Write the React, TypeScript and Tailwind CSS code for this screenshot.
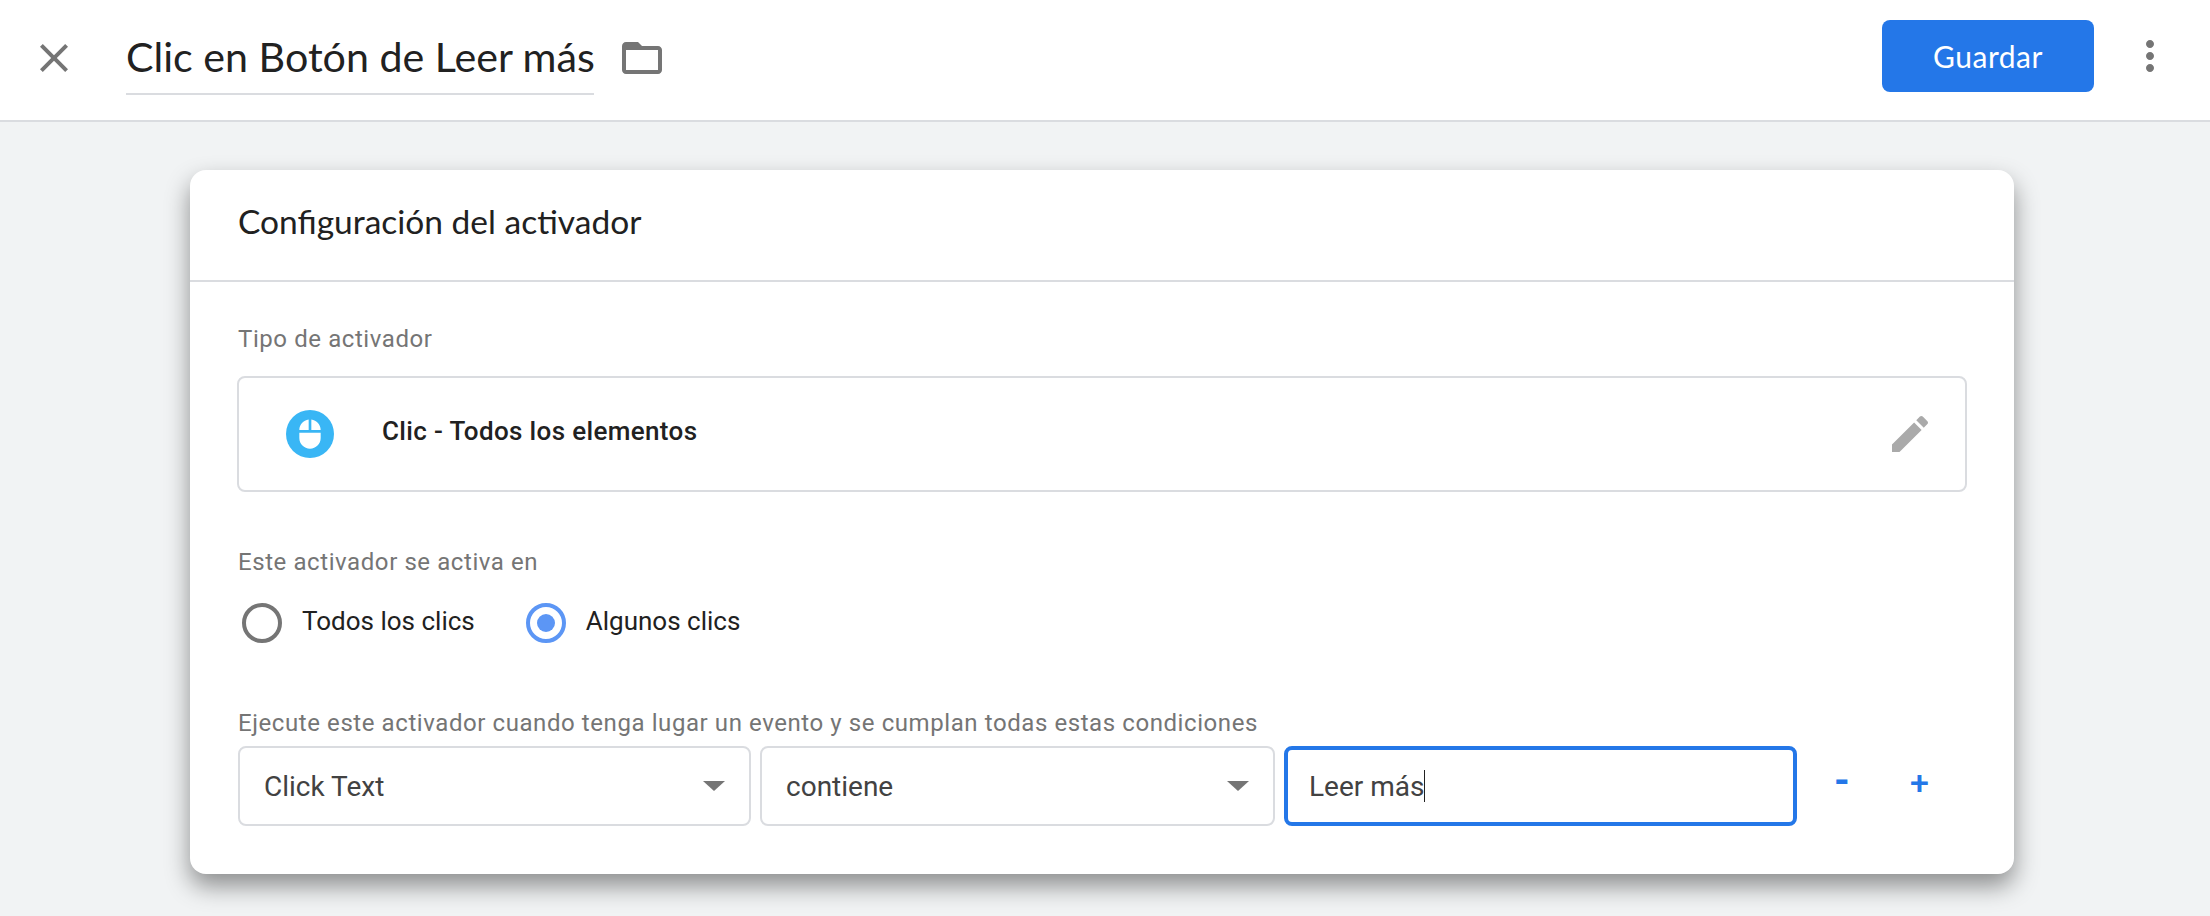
import {ReactNode} from "react";

const headingFont = "font-['Lato','Open_Sans',sans-serif]";

function Icon({d, size = 48, className}: {d: string, size?: number, className?: string}) {
    return (
        <svg width={size} height={size} viewBox="0 0 24 24" className={className} fill="currentColor">
            <path d={d}/>
        </svg>
    );
}

function Label({children, className}: {children: ReactNode, className?: string}) {
    return <div className={`pl-px text-[24px] leading-[28px] tracking-[0.58px] text-[#757575] ${className}`}>{children}</div>;
}

function Radio({label, checked}: {label: string, checked?: boolean}) {
    return (
        <div className="flex items-center gap-[20px]">
            {checked ? (
                <div className="flex size-[40px] items-center justify-center rounded-full border-[4px] border-[#5c96f5]">
                    <div className="size-[18px] rounded-full bg-[#5c96f5]"/>
                </div>
            ) : (
                <div className="size-[40px] rounded-full border-[4px] border-[#757575]"/>
            )}
            <span className="mb-[4px] text-[26px] leading-[32px] text-[#212121]">{label}</span>
        </div>
    );
}

function SelectBox({label, className}: {label: string, className?: string}) {
    return (
        <div className={`flex h-[80px] items-center justify-between rounded-[8px] border-2 border-[#dadce0] pl-[24px] pr-[24px] ${className}`}>
            <span className="mt-px text-[28px] text-[#424242]">{label}</span>
            <div className="h-0 w-0 border-x-[11px] border-t-[10px] border-x-transparent border-t-[#757575]"/>
        </div>
    );
}

export default function App() {
    return (
        <div className="h-[916px] w-[2210px] overflow-hidden bg-[#f1f3f4] font-['Roboto',sans-serif]">
            <header className="flex h-[122px] items-center border-b-2 border-[#dadce0] bg-white pb-[4px] pl-[30px] pr-[36px]">
                <Icon className="text-[#757575]"
                      d="M19 6.41 17.59 5 12 10.59 6.41 5 5 6.41 10.59 12 5 17.59 6.41 19 12 13.41 17.59 19 19 17.59 13.41 12z"/>
                <div className={`ml-[48px] flex h-[74px] w-[468px] items-center whitespace-nowrap border-b-2 border-[#dadce0] text-[41.2px] text-[#212121] ${headingFont}`}>
                    Clic en Botón de Leer más
                </div>
                <Icon className="ml-[24px] text-[#757575]"
                      d="M20 6h-8l-2-2H4c-1.1 0-1.99.9-1.99 2L2 18c0 1.1.9 2 2 2h16c1.1 0 2-.9 2-2V8c0-1.1-.9-2-2-2zm0 12H4V8h16v10z"/>
                <button className={`mb-[4px] ml-auto h-[72px] w-[212px] rounded-[8px] bg-[#2477e8] text-[30px] tracking-[0.5px] text-white ${headingFont}`}>
                    Guardar
                </button>
                <Icon className="mb-[4px] ml-[32px] text-[#757575]"
                      d="M12 8c1.1 0 2-.9 2-2s-.9-2-2-2-2 .9-2 2 .9 2 2 2zm0 2c-1.1 0-2 .9-2 2s.9 2 2 2 2-.9 2-2-.9-2-2-2zm0 6c-1.1 0-2 .9-2 2s.9 2 2 2 2-.9 2-2-.9-2-2-2z"/>
            </header>

            <main className="ml-[190px] mt-[48px] h-[704px] w-[1824px] rounded-[16px] bg-white shadow-[0_12px_24px_rgba(0,0,0,0.42)]">
                <div className={`flex h-[112px] items-center border-b-2 border-[#dadce0] pb-[8px] pl-[48px] text-[33.5px] text-[#212121] ${headingFont}`}>
                    Configuración del activador
                </div>
                <div className="px-[47px] pt-[43px]">
                    <Label>Tipo de activador</Label>
                    <div className="mt-[23px] flex h-[116px] items-center rounded-[8px] border-2 border-[#dadce0] pl-[47px] pr-[31px]">
                        <div className="flex size-[48px] items-center justify-center rounded-full bg-[#39b6f5] text-white">
                            <Icon size={32}
                                  d="M13 1.07V9h7c0-4.08-3.05-7.44-7-7.93zM4 15c0 4.42 3.58 8 8 8s8-3.58 8-8v-4H4v4zm7-13.93C7.05 1.56 4 4.92 4 9h7V1.07z"/>
                        </div>
                        <span className="mb-[6px] ml-[48px] text-[26px] font-medium tracking-[0.35px] text-[#212121]">Clic - Todos los elementos</span>
                        <Icon className="ml-auto text-[#aaaaaa]"
                              d="M3 17.25V21h3.75L17.81 9.94l-3.75-3.75L3 17.25zM20.71 7.04c.39-.39.39-1.02 0-1.41l-2.34-2.34c-.39-.39-1.02-.39-1.41 0l-1.83 1.83 3.75 3.75 1.83-1.83z"/>
                    </div>
                    <Label className="mt-[56px]">Este activador se activa en</Label>
                    <div className="mt-[27px] flex gap-[51px] pl-[5px]">
                        <Radio label="Todos los clics"/>
                        <Radio label="Algunos clics" checked/>
                    </div>
                    <Label className="mt-[66px]">Ejecute este activador cuando tenga lugar un evento y se cumplan todas estas condiciones</Label>
                    <div className="mt-[9px] flex items-center gap-[9px] pl-px">
                        <SelectBox label="Click Text" className="w-[513px]"/>
                        <SelectBox label="contiene" className="w-[515px]"/>
                        <div className="flex h-[80px] w-[513px] items-center rounded-[8px] border-[4px] border-[#2477e8] pl-[21px]">
                            <span className="mt-px text-[28px] text-[#424242]">Leer más</span>
                            <div className="h-[32px] w-px bg-[#212121]"/>
                        </div>
                        <div className="mb-[8px] ml-[28px] flex w-[95px] items-center justify-between leading-none text-[#2477e8]">
                            <span className="mb-[3px] text-[40px] font-bold">-</span>
                            <span className="text-[34px] font-medium">+</span>
                        </div>
                    </div>
                </div>
            </main>
        </div>
    );
}
